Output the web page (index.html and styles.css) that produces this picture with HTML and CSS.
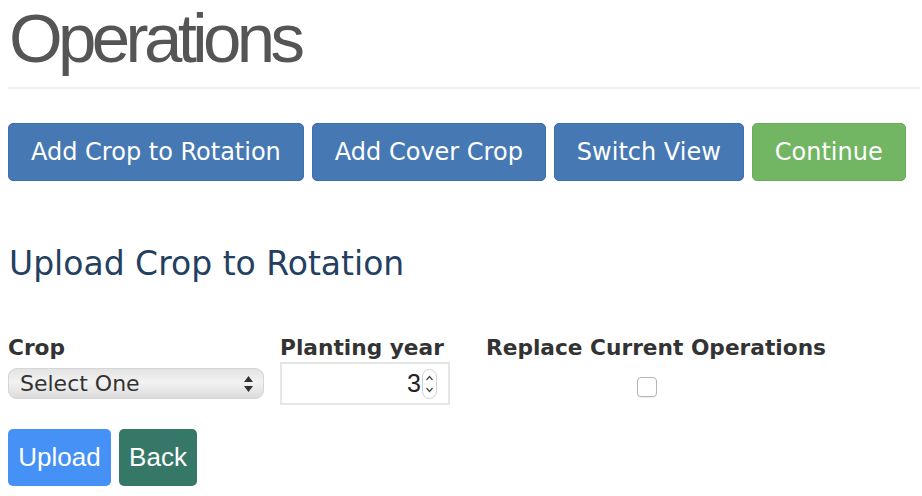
FILE: index.html
```html
<!DOCTYPE html>
<html>
<head>
<meta charset="utf-8">
<link rel="stylesheet" href="styles.css">
</head>
<body>
<div class="page">
  <h1 class="title">Operations</h1>
  <hr class="rule">
  <div class="actions">
    <button class="btn btn-blue">Add Crop to Rotation</button>
    <button class="btn btn-blue">Add Cover Crop</button>
    <button class="btn btn-blue">Switch View</button>
    <button class="btn btn-green">Continue</button>
  </div>
  <h2 class="subtitle">Upload Crop to Rotation</h2>
  <div class="fields">
    <div class="field field-crop">
      <label class="label">Crop</label>
      <div class="select">
        <span class="select-text">Select One</span>
        <svg class="select-arrows" width="11" height="18" viewBox="0 0 11 18"><path d="M5.5 1 L10 7 L1 7 Z M1 11 L10 11 L5.5 17 Z" fill="#333"/></svg>
      </div>
    </div>
    <div class="field field-year">
      <label class="label">Planting year</label>
      <div class="number">
        <span class="number-value">3</span>
        <span class="spin">
          <svg width="15" height="30" viewBox="0 0 15 30"><rect x="0.5" y="0.5" width="14" height="29" rx="7" fill="#fff" stroke="#cfcfcf"/><path d="M4.5 11 L7.5 7.5 L10.5 11 M4.5 19 L7.5 22.5 L10.5 19" fill="none" stroke="#444" stroke-width="1.2"/></svg>
        </span>
      </div>
    </div>
    <div class="field field-replace">
      <label class="label">Replace Current Operations</label>
      <div class="check-wrap"><span class="check"></span></div>
    </div>
  </div>
  <div class="form-actions">
    <button class="btn2 btn-upload">Upload</button>
    <button class="btn2 btn-back">Back</button>
  </div>
</div>
</body>
</html>
```
FILE: styles.css
```css
html, body {
  margin: 0;
  padding: 0;
  background: #fff;
}
.page {
  padding: 0 2px 0 8px;
}
.title {
  margin: 0;
  font-family: "Liberation Sans", Arial, sans-serif;
  font-weight: 400;
  font-size: 69px;
  line-height: 77px;
  letter-spacing: -4.6px;
  color: #555;
  padding-left: 1px;
}
.rule {
  margin: 10px 0 0 0;
  border: 0;
  border-top: 2px solid #eee;
  height: 0;
}
.actions {
  display: flex;
  gap: 8px;
  margin-top: 34px;
}
.btn {
  font-family: "DejaVu Sans", Verdana, sans-serif;
  font-size: 24px;
  color: #fff;
  height: 58px;
  padding: 0 22px;
  border-radius: 5px;
  border: 1px solid #3d6ea6;
  background: #4679b3;
}
.btn-green {
  background: #72b563;
  border-color: #69ab5b;
}
.subtitle {
  margin: 63px 0 0 0;
  font-family: "DejaVu Sans", Verdana, sans-serif;
  font-weight: 400;
  font-size: 33px;
  line-height: 40px;
  color: #243f5f;
  padding-left: 1px;
}
.fields {
  display: flex;
  margin-top: 52px;
}
.label {
  display: block;
  font-family: "DejaVu Sans", Verdana, sans-serif;
  font-weight: 700;
  font-size: 21.7px;
  line-height: 24px;
  color: #333;
}
.field-crop {
  width: 272px;
}
.field-year {
  width: 206px;
}
.select {
  margin-top: 8px;
  width: 256px;
  height: 31px;
  box-sizing: border-box;
  border-radius: 9px;
  background: linear-gradient(#e2e2e2, #f2f2f2 45%, #dadada 100%);
  box-shadow: inset 0 0 0 1px #d6d6d6;
  display: flex;
  align-items: center;
  justify-content: space-between;
  padding: 0 10px 0 12px;
  font-family: "DejaVu Sans", Verdana, sans-serif;
  font-size: 22px;
  color: #333;
}
.select-arrows {
  display: block;
}
.number {
  margin-top: 2px;
  width: 170px;
  height: 43px;
  box-sizing: border-box;
  border: 2px solid #e6e6e6;
  display: flex;
  align-items: center;
  justify-content: flex-end;
  padding-right: 11px;
  font-family: "Liberation Sans", Arial, sans-serif;
  font-size: 25px;
  color: #222;
}
.spin svg {
  display: block;
  margin-left: 1px;
}
.check-wrap {
  display: flex;
  justify-content: center;
  padding-top: 17px;
  width: 322px;
}
.check {
  display: block;
  width: 20px;
  height: 20px;
  box-sizing: border-box;
  border: 1px solid #b5b5b5;
  border-radius: 4px;
  background: #fff;
  box-shadow: 0 1px 1px rgba(0,0,0,0.08);
}
.form-actions {
  display: flex;
  gap: 8px;
  margin-top: 24px;
}
.btn2 {
  font-family: "Liberation Sans", Arial, sans-serif;
  font-size: 26px;
  color: #fff;
  height: 57px;
  border: 0;
  border-radius: 5px;
  padding: 0 10px;
}
.btn-upload {
  background: #4591f5;
  width: 103px;
}
.btn-back {
  background: #367868;
  width: 78px;
}
```
